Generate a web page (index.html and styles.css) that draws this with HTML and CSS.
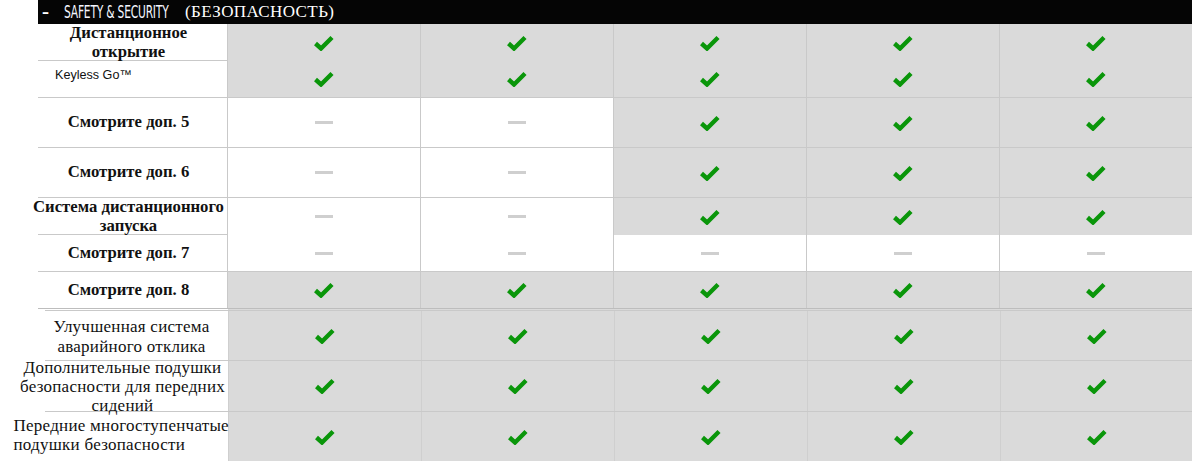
FILE: index.html
```html
<!DOCTYPE html>
<html lang="ru">
<head>
<meta charset="utf-8">
<title>Safety &amp; Security</title>
<link rel="stylesheet" href="styles.css">
</head>
<body>
<svg width="0" height="0" class="defs">
  <defs>
    <symbol id="chk" viewBox="0 0 20 16">
      <polyline points="1.5,8.5 7,13.5 18,2.5" fill="none" stroke="#0a960a" stroke-width="4.4" stroke-linejoin="miter"/>
    </symbol>
  </defs>
</svg>
<div class="page">
  <div class="bar">
    <span class="minus">–</span>
    <span class="en">SAFETY &amp; SECURITY</span>
    <span class="ru">(БЕЗОПАСНОСТЬ)</span>
  </div>

  <div class="top">
    <div class="row r37">
      <div class="label">Дистанционное<br>открытие</div>
      <div class="cell g"><svg class="ck"><use href="#chk"/></svg></div>
      <div class="cell g"><svg class="ck"><use href="#chk"/></svg></div>
      <div class="cell g"><svg class="ck"><use href="#chk"/></svg></div>
      <div class="cell g"><svg class="ck"><use href="#chk"/></svg></div>
      <div class="cell g"><svg class="ck"><use href="#chk"/></svg></div>
    </div>
    <div class="row r37">
      <div class="label sans">Keyless Go™</div>
      <div class="cell g"><svg class="ck"><use href="#chk"/></svg></div>
      <div class="cell g"><svg class="ck"><use href="#chk"/></svg></div>
      <div class="cell g"><svg class="ck"><use href="#chk"/></svg></div>
      <div class="cell g"><svg class="ck"><use href="#chk"/></svg></div>
      <div class="cell g"><svg class="ck"><use href="#chk"/></svg></div>
    </div>
    <div class="row r50">
      <div class="label">Смотрите доп. 5</div>
      <div class="cell"><span class="dash"></span></div>
      <div class="cell"><span class="dash"></span></div>
      <div class="cell g"><svg class="ck"><use href="#chk"/></svg></div>
      <div class="cell g"><svg class="ck"><use href="#chk"/></svg></div>
      <div class="cell g"><svg class="ck"><use href="#chk"/></svg></div>
    </div>
    <div class="row r50">
      <div class="label">Смотрите доп. 6</div>
      <div class="cell"><span class="dash"></span></div>
      <div class="cell"><span class="dash"></span></div>
      <div class="cell g"><svg class="ck"><use href="#chk"/></svg></div>
      <div class="cell g"><svg class="ck"><use href="#chk"/></svg></div>
      <div class="cell g"><svg class="ck"><use href="#chk"/></svg></div>
    </div>
    <div class="row r37">
      <div class="label">Система дистанционного<br>запуска</div>
      <div class="cell"><span class="dash"></span></div>
      <div class="cell"><span class="dash"></span></div>
      <div class="cell g"><svg class="ck"><use href="#chk"/></svg></div>
      <div class="cell g"><svg class="ck"><use href="#chk"/></svg></div>
      <div class="cell g"><svg class="ck"><use href="#chk"/></svg></div>
    </div>
    <div class="row r37">
      <div class="label">Смотрите доп. 7</div>
      <div class="cell"><span class="dash"></span></div>
      <div class="cell"><span class="dash"></span></div>
      <div class="cell"><span class="dash"></span></div>
      <div class="cell"><span class="dash"></span></div>
      <div class="cell"><span class="dash"></span></div>
    </div>
    <div class="row r37 last">
      <div class="label">Смотрите доп. 8</div>
      <div class="cell g"><svg class="ck"><use href="#chk"/></svg></div>
      <div class="cell g"><svg class="ck"><use href="#chk"/></svg></div>
      <div class="cell g"><svg class="ck"><use href="#chk"/></svg></div>
      <div class="cell g"><svg class="ck"><use href="#chk"/></svg></div>
      <div class="cell g"><svg class="ck"><use href="#chk"/></svg></div>
    </div>
  </div>

  <div class="bottom">
    <div class="row2 h50">
      <div class="label2"><div class="txt t1">Улучшенная система<br>аварийного отклика</div></div>
      <div class="cell2"><svg class="ck"><use href="#chk"/></svg></div>
      <div class="cell2"><svg class="ck"><use href="#chk"/></svg></div>
      <div class="cell2"><svg class="ck"><use href="#chk"/></svg></div>
      <div class="cell2"><svg class="ck"><use href="#chk"/></svg></div>
      <div class="cell2"><svg class="ck"><use href="#chk"/></svg></div>
    </div>
    <div class="row2 h51">
      <div class="label2"><div class="txt t2">Дополнительные подушки<br>безопасности для передних<br>сидений</div></div>
      <div class="cell2"><svg class="ck"><use href="#chk"/></svg></div>
      <div class="cell2"><svg class="ck"><use href="#chk"/></svg></div>
      <div class="cell2"><svg class="ck"><use href="#chk"/></svg></div>
      <div class="cell2"><svg class="ck"><use href="#chk"/></svg></div>
      <div class="cell2"><svg class="ck"><use href="#chk"/></svg></div>
    </div>
    <div class="row2 h50 end">
      <div class="label2"><div class="txt t3">Передние многоступенчатые<br>подушки безопасности</div></div>
      <div class="cell2"><svg class="ck"><use href="#chk"/></svg></div>
      <div class="cell2"><svg class="ck"><use href="#chk"/></svg></div>
      <div class="cell2"><svg class="ck"><use href="#chk"/></svg></div>
      <div class="cell2"><svg class="ck"><use href="#chk"/></svg></div>
      <div class="cell2"><svg class="ck"><use href="#chk"/></svg></div>
    </div>
  </div>
</div>
</body>
</html>
```

FILE: styles.css
```css
* { box-sizing: border-box; }
html, body { margin: 0; padding: 0; background: #fff; }
body { width: 1192px; height: 461px; overflow: hidden; }
.defs { position: absolute; width: 0; height: 0; }

.page { width: 1192px; }

.bar {
  margin-left: 38px;
  height: 24px;
  background: #050505;
  color: #fff;
  display: flex;
  align-items: center;
  white-space: nowrap;
}
.minus {
  font-family: "DejaVu Sans", sans-serif;
  font-weight: bold;
  font-size: 14px;
  margin-left: 4px;
  width: 10px;
}
.en {
  font-family: "DejaVu Sans Condensed", "DejaVu Sans", sans-serif;
  font-size: 17px;
  display: inline-block;
  transform: scaleX(0.70);
  transform-origin: left center;
  margin-left: 12px;
  width: 121px;
  color: #f4f6ff;
  letter-spacing: -0.3px;
}
.ru {
  font-family: "Liberation Serif", serif;
  font-size: 17px;
  letter-spacing: 0.4px;
}

.top { margin-left: 38px; }
.row {
  display: grid;
  grid-template-columns: 189px repeat(5, 193px);
  border-bottom: 1px solid #c9c9c9;
}
.row.r37 { height: 37px; }
.row.r50 { height: 50px; }
.row.last { border-bottom-color: #bdbdbd; }

.label {
  font-family: "Liberation Serif", serif;
  font-weight: bold;
  font-size: 16.7px;
  line-height: 18.5px;
  color: #111;
  text-align: center;
  display: flex;
  align-items: center;
  justify-content: center;
  padding-right: 8px;
  white-space: nowrap;
}
.label.sans {
  font-family: "Liberation Sans", Arial, sans-serif;
  font-weight: normal;
  font-size: 12.6px;
  justify-content: flex-start;
  padding-left: 17px;
  padding-bottom: 8px;
}

.cell {
  border-left: 1px solid #c9c9c9;
  display: flex;
  align-items: center;
  justify-content: center;
  background: #fff;
}
.cell.g { background: #dadada; }

.ck { width: 20px; height: 16px; display: block; }
.dash { display: block; width: 18px; height: 3px; background: #cfcfcf; }

.bottom {
  margin-left: 45px;
  padding-top: 1px;
  background: linear-gradient(to right, #fff 183px, #dadada 183px);
}
.row2 {
  display: grid;
  grid-template-columns: 183px repeat(4, 193px) 1fr;
  grid-template-rows: minmax(0, 1fr);
  border-top: 1px solid #c9c9c9;
}
.row2.h50 { height: 50px; }
.row2.h51 { height: 51px; }
.label2 {
  min-height: 0;
  display: flex;
  align-items: center;
  justify-content: center;
  overflow: visible;
  position: relative;
  z-index: 1;
}
.txt {
  flex: none;
  width: 222px;
  font-family: "Liberation Serif", serif;
  font-size: 17px;
  line-height: 19.5px;
  color: #111;
  text-align: center;
  letter-spacing: 0.25px;
  white-space: nowrap;
}
.txt.t1 { margin-left: -10px; padding-top: 2px; }
.txt.t2 { margin-left: -28px; line-height: 19px; }
.txt.t3 { margin-left: -28px; text-align: left; padding-left: 2px; padding-bottom: 4px; line-height: 19px; }
.cell2 {
  min-height: 0;
  border-left: 1px solid #cfcfcf;
  background: #dadada;
  display: flex;
  align-items: center;
  justify-content: center;
}
```
